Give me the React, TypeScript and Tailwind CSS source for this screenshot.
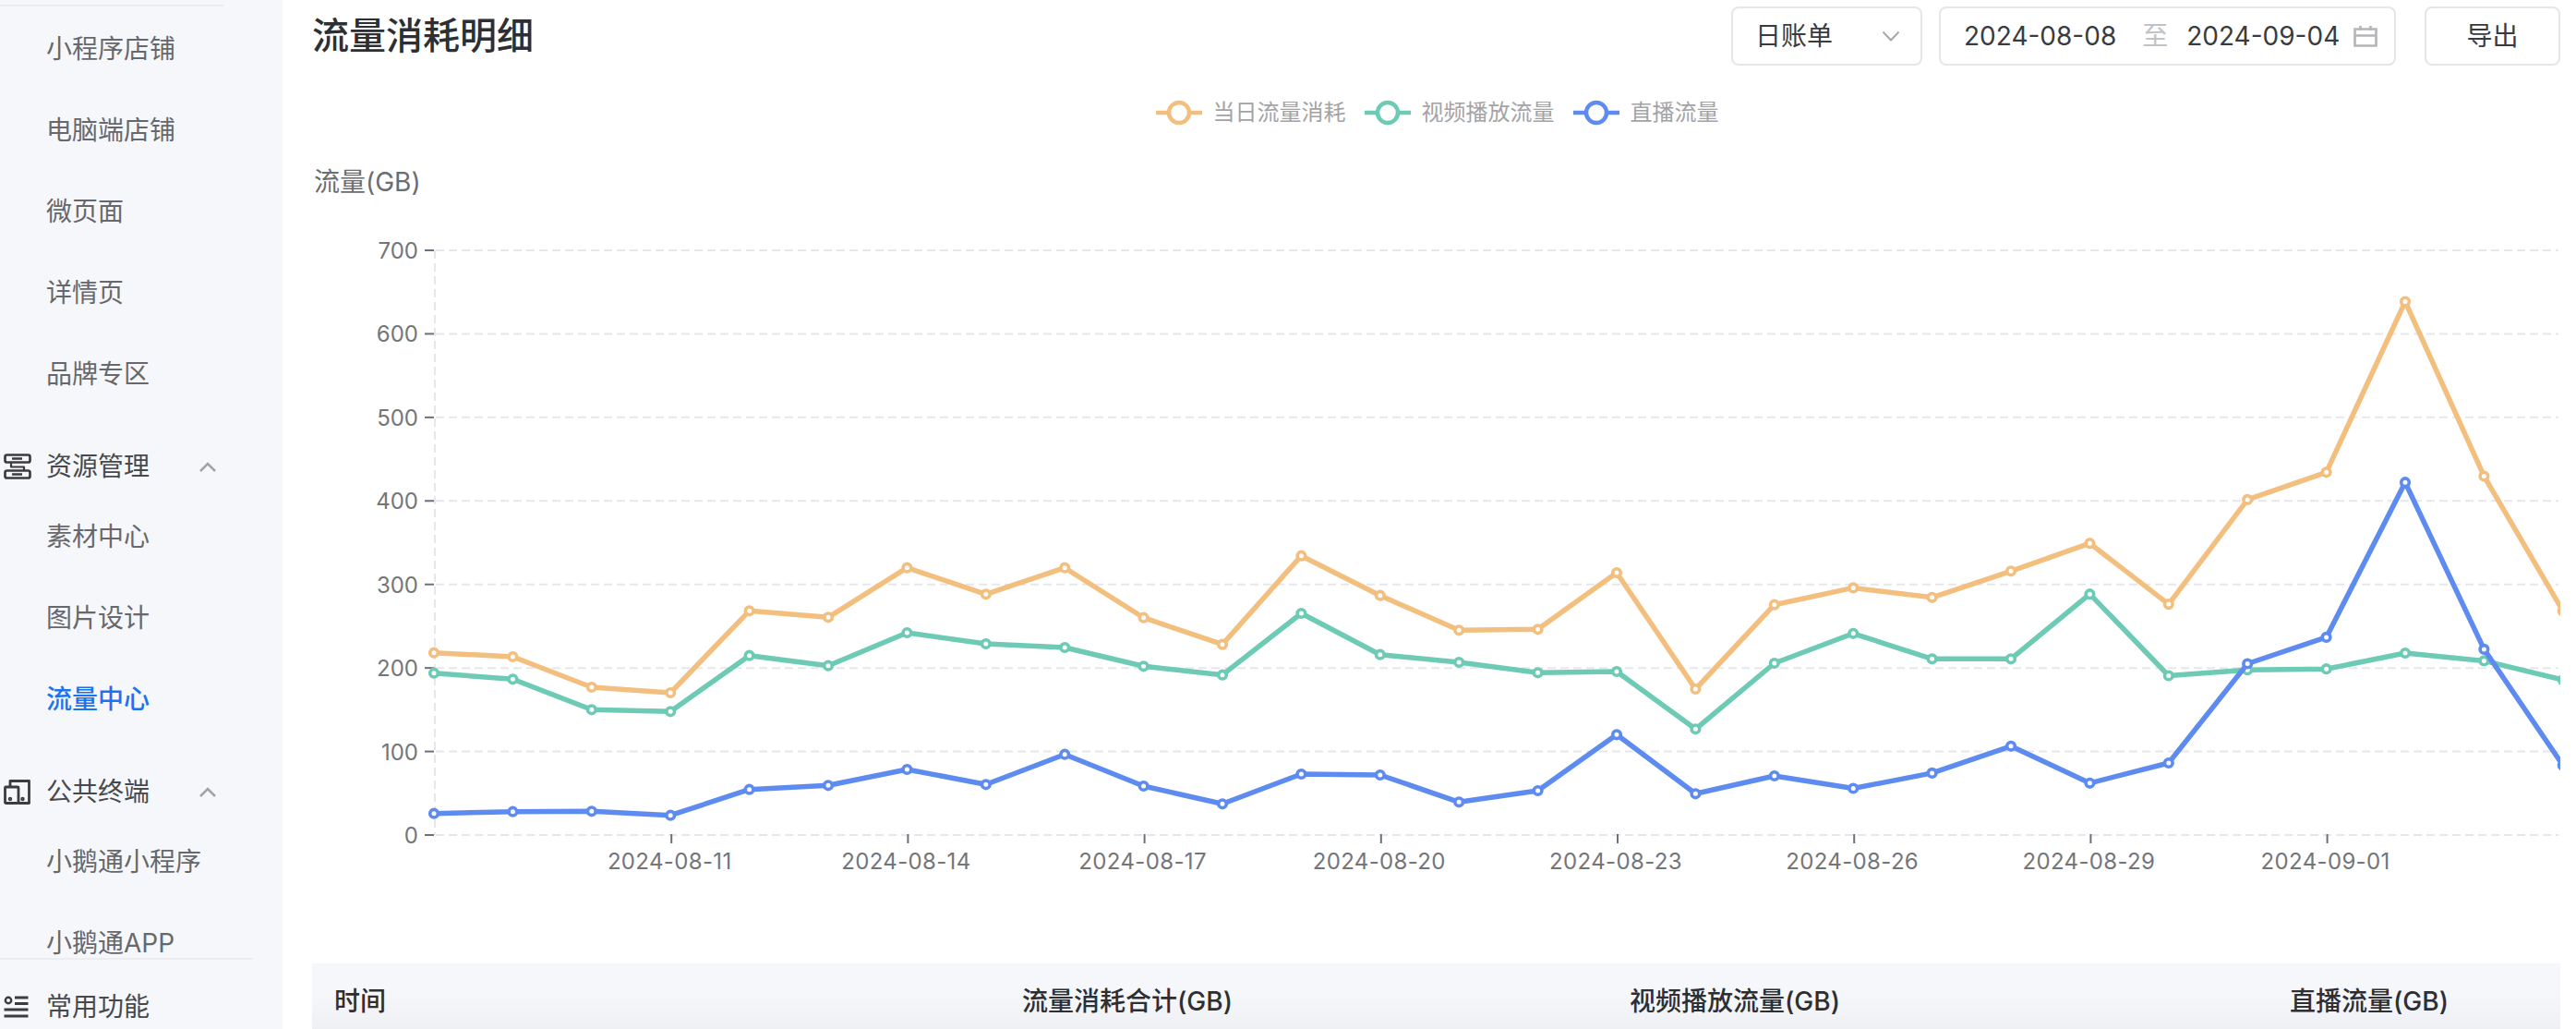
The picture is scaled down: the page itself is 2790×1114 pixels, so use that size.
import type { FC, ReactNode } from 'react';

const FIRST_X = 470;
const STEP_X = 85.4;
const ZERO_Y = 904;
const UNIT_Y = 90.43;

// y positions of each day, 2024-08-08 to 2024-09-04
const series = [
  {
    name: '当日流量消耗',
    color: '#f3bf7e',
    ys: [706.7, 711, 744, 750, 661.3, 668.3, 614.7, 643.3, 614.7, 668.7, 697.7, 601.7, 644.7, 682.3, 681.3, 620, 746, 654.7, 636.4, 646.8, 618.3, 588.2, 654.1, 540.9, 511.3, 326.5, 515.5, 661.4],
  },
  {
    name: '视频播放流量',
    color: '#6ccab5',
    ys: [728.7, 735.3, 768.3, 770.3, 709.7, 720.7, 685, 697, 701, 721.3, 730.7, 664, 708.7, 717, 728.3, 727, 789.3, 718, 685.8, 713.3, 713.3, 643.2, 731.5, 725.2, 724.2, 707, 715.4, 736.1],
  },
  {
    name: '直播流量',
    color: '#5e8bf0',
    ys: [880.7, 878.7, 878.3, 882.7, 854.7, 850.3, 833, 849.3, 816.7, 851, 870.3, 838, 839, 868.3, 856, 795.3, 859.3, 840, 853.5, 836.9, 807.8, 847.8, 826, 718.5, 689.9, 522.2, 702.9, 828.5],
  },
];

const xLabels = ['2024-08-11', '2024-08-14', '2024-08-17', '2024-08-20', '2024-08-23', '2024-08-26', '2024-08-29', '2024-09-01'];

const Chevron: FC = () => (
  <svg width="18" height="11" viewBox="0 0 18 11" fill="none" stroke="#a3a3a3" strokeWidth="2.6">
    <path d="M1 10 L9 2 L17 10" />
  </svg>
);

const ResourceIcon: FC = () => (
  <svg width="30" height="28" viewBox="0 0 30 28" fill="none" stroke="#3c3c3e" strokeWidth="2.7" strokeLinejoin="round">
    <rect x="1.5" y="1.5" width="27" height="8" rx="2" />
    <rect x="1.5" y="18.5" width="27" height="8" rx="2" />
    <path d="M8 10 V14.5 H22 V18" strokeWidth="2.2" />
    <path d="M9 5.5 H20 M9 22.5 H20" />
  </svg>
);

const TerminalIcon: FC = () => (
  <svg width="29" height="27" viewBox="0 0 29 27" fill="none" stroke="#3c3c3e" strokeWidth="2.8" strokeLinejoin="round">
    <path d="M7 8 V1.5 H27.5 V25.5 H16" />
    <rect x="1.5" y="8" width="14.5" height="17.5" rx="1" />
    <circle cx="7" cy="21" r="0.8" fill="#3c3c3e" />
    <circle cx="20.5" cy="21" r="0.8" fill="#3c3c3e" />
  </svg>
);

const CommonIcon: FC = () => (
  <svg width="27" height="24" viewBox="0 0 27 24" fill="none" stroke="#3c3c3e" strokeWidth="3">
    <circle cx="5" cy="5" r="3.2" strokeWidth="2.4" />
    <path d="M12 2 H26.5 M12 8.5 H26.5 M0.5 15 H26.5 M0.5 22 H26.5" />
  </svg>
);

const MenuItem: FC<{ label: string; active?: boolean }> = ({ label, active }) => (
  <div className={`h-[88px] pl-[50px] flex items-center text-[28px] ${active ? 'text-[#1a74f2] font-medium' : 'text-[#67686c]'}`}>
    {label}
  </div>
);

const MenuGroup: FC<{ label: string; icon: ReactNode }> = ({ label, icon }) => (
  <div className="h-[88px] pt-[24px] pl-[4px] w-[234px] flex items-start">
    <div className="h-[64px] w-full flex items-center text-[28px] text-[#48494c]">
      <span className="w-[46px] flex">{icon}</span>
      <span>{label}</span>
      <span className="ml-auto flex">
        <Chevron />
      </span>
    </div>
  </div>
);

const Sidebar: FC = () => (
  <aside className="w-[306px] h-full shrink-0 flex flex-col bg-[#f6f7fb]">
    <div className="flex-1 min-h-0 overflow-hidden pt-[5px]">
      <div className="w-[243px] h-[2px] mb-[2px] bg-[#ecedf1]" />
      <MenuItem label="小程序店铺" />
      <MenuItem label="电脑端店铺" />
      <MenuItem label="微页面" />
      <MenuItem label="详情页" />
      <MenuItem label="品牌专区" />
      <MenuGroup label="资源管理" icon={<ResourceIcon />} />
      <MenuItem label="素材中心" />
      <MenuItem label="图片设计" />
      <MenuItem label="流量中心" active />
      <MenuGroup label="公共终端" icon={<TerminalIcon />} />
      <MenuItem label="小鹅通小程序" />
      <MenuItem label="小鹅通APP" />
    </div>
    <div className="h-[77px] w-[274px] shrink-0 border-t-2 border-[#ecedf1] pt-[25px] pl-[4px]">
      <div className="h-[52px] flex items-center text-[28px] text-[#48494c]">
        <span className="w-[46px] flex">
          <CommonIcon />
        </span>
        常用功能
      </div>
    </div>
  </aside>
);

const Toolbar: FC = () => (
  <div className="h-[64px] flex items-center justify-between">
    <h1 className="-ml-[2px] text-[40px] font-medium text-[#2e2f33]">流量消耗明细</h1>
    <div className="flex items-center">
      <div className="w-[207px] h-[64px] pl-[24px] pr-[22px] flex items-center justify-between rounded-lg border-2 border-[#e6e6e9] text-[28px] text-[#3a3b3e]">
        日账单
        <svg width="20" height="12" viewBox="0 0 20 12" fill="none" stroke="#a8a8a8" strokeWidth="2">
          <path d="M1.5 1.5 L10 10.5 L18.5 1.5" />
        </svg>
      </div>
      <div className="w-[495px] h-[64px] ml-[18px] pl-[25px] flex items-center rounded-lg border-2 border-[#e6e6e9] text-[28px] text-[#3a3b3e]">
        <span>2024-08-08</span>
        <span className="ml-[28px] text-[#c0c2c7]">至</span>
        <span className="ml-[20px]">2024-09-04</span>
        <svg className="ml-[15px]" width="26" height="23" viewBox="0 0 26 23" fill="none" stroke="#b5b5b8" strokeWidth="2.6">
          <path d="M1.5 3.5 H24.5 V21.5 H1.5 Z" />
          <path d="M1.5 10.5 H24.5 M7.5 0 V5 M18.5 0 V5" />
        </svg>
      </div>
      <div className="w-[147px] h-[64px] ml-[31px] flex items-center justify-center rounded-lg border-2 border-[#e6e6e9] text-[28px] text-[#3a3b3e]">
        导出
      </div>
    </div>
  </div>
);

const Legend: FC = () => (
  <div className="h-[34px] mt-[34px] flex items-center justify-center gap-[20px] text-[24px] text-[#a3a3a6]">
    {series.map(s => (
      <div key={s.name} className="flex items-center gap-[12px]">
        <svg width="50" height="28" viewBox="0 0 50 28" fill="none" stroke={s.color} strokeWidth="4.5">
          <path d="M0 14 H50" />
          <circle cx="25" cy="14" r="11" fill="#fff" />
        </svg>
        {s.name}
      </div>
    ))}
  </div>
);

const Chart: FC = () => {
  const gridRows = [0, 1, 2, 3, 4, 5, 6, 7];
  return (
    <svg className="block w-[2433px] h-[826px]" viewBox="340 217 2433 826">
      {gridRows.map(n => {
        const y = ZERO_Y - UNIT_Y * n;
        return (
          <g key={n}>
            <line x1="472" x2="2771" y1={y} y2={y} stroke="#e6e7ea" strokeWidth="2" strokeDasharray="9 5" />
            <line x1="460" x2="470" y1={y} y2={y} stroke="#6e7079" strokeWidth="2" />
            <text x="453" y={y + 9} textAnchor="end" fontSize="24" fill="#747579">
              {n * 100}
            </text>
          </g>
        );
      })}
      <line x1="471" x2="471" y1={ZERO_Y - UNIT_Y * 7} y2={ZERO_Y} stroke="#e6e7ea" strokeWidth="2" strokeDasharray="9 5" />
      {xLabels.map((label, i) => {
        const x = FIRST_X + STEP_X * 3 * (i + 1);
        return (
          <g key={label}>
            <line x1={x + 1} x2={x + 1} y1="903" y2="913" stroke="#6e7079" strokeWidth="2" />
            <text x={x - 1} y="941" textAnchor="middle" fontSize="24" letterSpacing="0.35" fill="#747579">
              {label}
            </text>
          </g>
        );
      })}
      {series.map(s => {
        const pts = s.ys.map((y, i) => ({ x: FIRST_X + STEP_X * i, y }));
        return (
          <g key={s.name}>
            <polyline points={pts.map(p => `${p.x},${p.y}`).join(' ')} fill="none" stroke={s.color} strokeWidth="5.5" strokeLinejoin="round" />
            {pts.map(p => (
              <circle key={p.x} cx={p.x} cy={p.y} r="4.3" fill="#fff" stroke={s.color} strokeWidth="3.6" />
            ))}
          </g>
        );
      })}
    </svg>
  );
};

const App: FC = () => (
  <div className="w-[2790px] h-[1114px] flex overflow-hidden bg-white font-[Inter,'Noto_Sans_CJK_SC',sans-serif]">
    <Sidebar />
    <main className="flex-1 min-w-0 pl-[34px] pr-[17px] pt-[7px]">
      <Toolbar />
      <Legend />
      <div className="h-[40px] mt-[38px] flex items-center text-[28px] text-[#6c6d70]">流量(GB)</div>
      <Chart />
      <div className="-ml-[2px] h-[82px] pl-[24px] grid grid-cols-[745px_658px_715px_1fr] items-center bg-linear-to-b from-[#f5f7fb] from-40% to-[#eceef2] text-[28px] font-medium text-[#2e2f33]">
        <span>时间</span>
        <span>流量消耗合计(GB)</span>
        <span>视频播放流量(GB)</span>
        <span>直播流量(GB)</span>
      </div>
    </main>
  </div>
);

export default App;
